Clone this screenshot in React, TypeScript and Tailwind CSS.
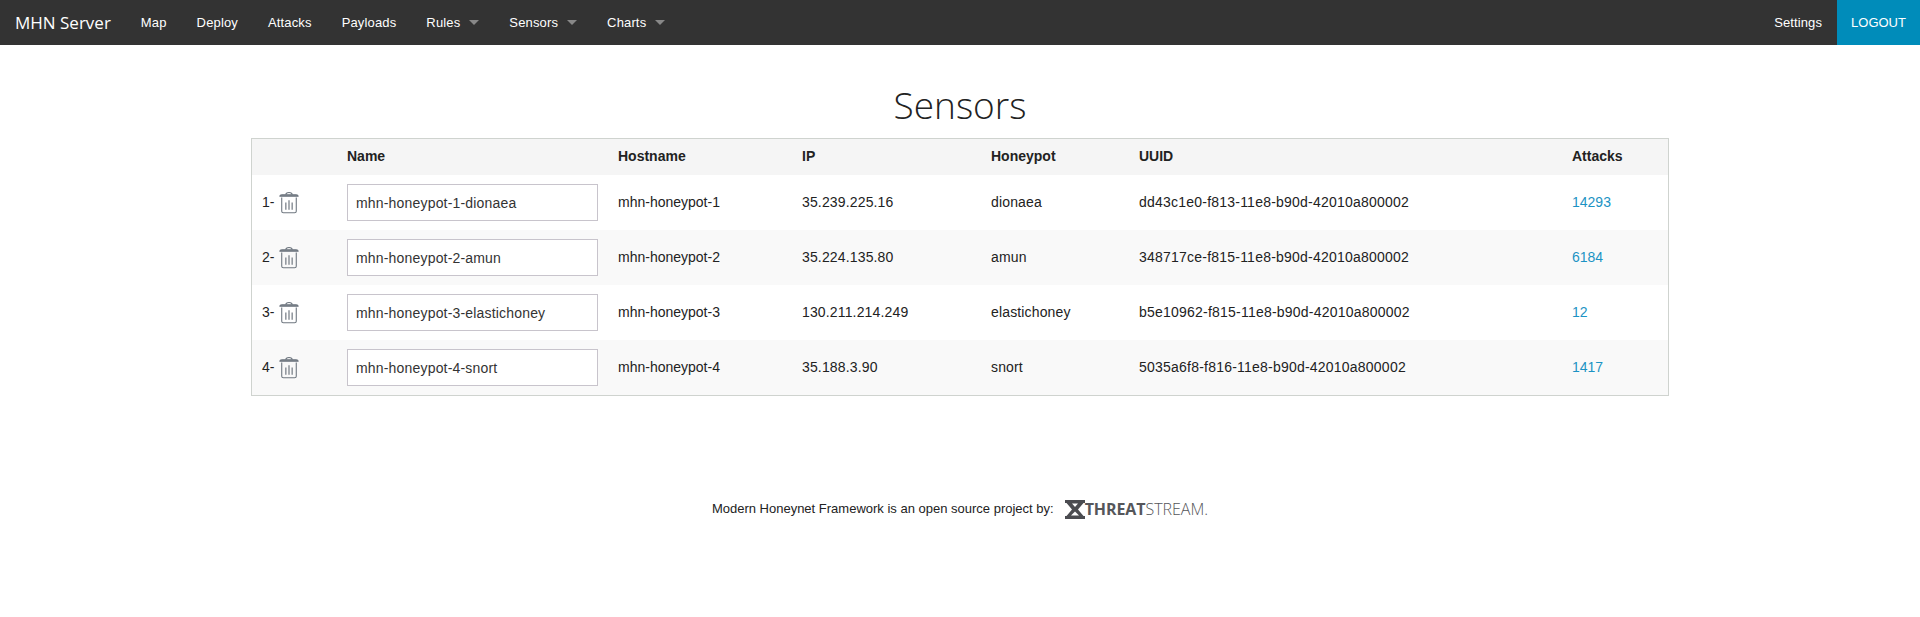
import React from "react";

const rows = [
  { n: 1, name: "mhn-honeypot-1-dionaea", host: "mhn-honeypot-1", ip: "35.239.225.16", pot: "dionaea", uuid: "dd43c1e0-f813-11e8-b90d-42010a800002", attacks: "14293" },
  { n: 2, name: "mhn-honeypot-2-amun", host: "mhn-honeypot-2", ip: "35.224.135.80", pot: "amun", uuid: "348717ce-f815-11e8-b90d-42010a800002", attacks: "6184" },
  { n: 3, name: "mhn-honeypot-3-elastichoney", host: "mhn-honeypot-3", ip: "130.211.214.249", pot: "elastichoney", uuid: "b5e10962-f815-11e8-b90d-42010a800002", attacks: "12" },
  { n: 4, name: "mhn-honeypot-4-snort", host: "mhn-honeypot-4", ip: "35.188.3.90", pot: "snort", uuid: "5035a6f8-f816-11e8-b90d-42010a800002", attacks: "1417" },
];

function Trash() {
  return (
    <svg width="20" height="23" viewBox="0 0 22 24" fill="none" stroke="#6f7780" strokeWidth="1.2" className="block">
      <path d="M1 5 C1 3.6 2 3.4 3.5 3.4 H18.5 C20 3.4 21 3.6 21 5 Z" fill="#8a9097" />
      <path d="M7.5 3.4 C7.5 1.4 9 1 11 1 C13 1 14.5 1.4 14.5 3.4" />
      <path d="M3 6.5 V21.5 C3 22.6 3.8 23.2 4.8 23.2 H17.2 C18.2 23.2 19 22.6 19 21.5 V6.5" />
      <path d="M7.5 12 V20 M11 9.5 V20 M14.5 12 V20" strokeWidth="1.6" stroke="#8a9097" />
    </svg>
  );
}

function Caret() {
  return <span className="ml-[9px] inline-block h-0 w-0 border-x-[5px] border-t-[5px] border-x-transparent border-t-[#888888]" />;
}

function NavLink({ label, caret, cls }: { label: string; caret?: boolean; cls: string }) {
  return (
    <a className={`flex items-center tracking-[0.15px] ${cls}`}>
      {label}
      {caret && <Caret />}
    </a>
  );
}

export default function App() {
  return (
    <div className="min-h-[617px] bg-white font-['Liberation_Sans',Arial,sans-serif] text-[14px] text-[#222222]">
      <nav className="flex h-[45px] items-center bg-[#333333] text-[13px] text-white">
        <span className="ml-[15px] mr-[30px] font-['Open_Sans',sans-serif] text-[17px] leading-[45px]">MHN Server</span>
        <NavLink label="Map" cls="mr-[30px]" />
        <NavLink label="Deploy" cls="mr-[30px]" />
        <NavLink label="Attacks" cls="mr-[30px]" />
        <NavLink label="Payloads" cls="mr-[30px]" />
        <NavLink label="Rules" caret cls="mr-[30px]" />
        <NavLink label="Sensors" caret cls="mr-[30px]" />
        <NavLink label="Charts" caret cls="" />
        <a className="ml-auto mr-[15px] tracking-[0.1px]">Settings</a>
        <a className="flex h-full w-[83px] items-center justify-center bg-[#008cba]">LOGOUT</a>
      </nav>

      <main className="flex flex-col items-center">
        <h1 className="mb-[8px] mt-[35px] font-['Open_Sans',sans-serif] text-[37px] font-light leading-[50px] text-[#222222]">Sensors</h1>
        <div className="w-[1418px] border border-[#cfd3cf]">
          <table className="w-full table-fixed">
            <colgroup>
              <col className="w-[85px]" />
              <col className="w-[271px]" />
              <col className="w-[184px]" />
              <col className="w-[189px]" />
              <col className="w-[148px]" />
              <col className="w-[433px]" />
              <col className="w-[106px]" />
            </colgroup>
            <thead className="bg-[#f5f5f5]">
              <tr className="h-[36px] text-left font-bold">
                <th className="pb-[1px] pl-[10px]" />
                <th className="pb-[1px] pl-[10px]">Name</th>
                <th className="pb-[1px] pl-[10px]">Hostname</th>
                <th className="pb-[1px] pl-[10px]">IP</th>
                <th className="pb-[1px] pl-[10px]">Honeypot</th>
                <th className="pb-[1px] pl-[10px]">UUID</th>
                <th className="pb-[1px] pl-[10px]">Attacks</th>
              </tr>
            </thead>
            <tbody>
              {rows.map((r) => (
                <tr key={r.n} className="h-[55px] even:bg-[#f9f9f9]">
                  <td className="pl-[10px]">
                    <div className="flex items-center gap-[5px]">
                      <span>{r.n}-</span>
                      <Trash />
                    </div>
                  </td>
                  <td className="pl-[10px]">
                    <input
                      readOnly
                      value={r.name}
                      className="block h-[37px] w-[251px] border border-[#c8c4cc] bg-white px-[8px] text-[14px] tracking-[0.18px] text-[#333333] outline-none"
                    />
                  </td>
                  <td className="pl-[10px]">{r.host}</td>
                  <td className="pl-[10px] tracking-[0.15px]">{r.ip}</td>
                  <td className="pl-[10px] tracking-[0.15px]">{r.pot}</td>
                  <td className="pl-[10px] tracking-[0.22px]">{r.uuid}</td>
                  <td className="pl-[10px]">
                    <a className="text-[#1c93c4]">{r.attacks}</a>
                  </td>
                </tr>
              ))}
            </tbody>
          </table>
        </div>

        <footer className="mt-[103px] flex h-[20px] items-center">
          <span className="text-[13px]">Modern Honeynet Framework is an open source project by:</span>
          <span className="ml-[11px] flex items-center text-[#55565a]">
            <svg width="20" height="19" viewBox="0 0 20 19" className="block">
              <path d="M0 0 H20 V3 H18.5 L13 9.5 L18.5 16 H20 V19 H0 V16 H1.5 L7 9.5 L1.5 3 H0 Z M7 3.5 L10 7 L13 3.5 Z M6 15.5 H14 L10 11.5 Z" fill="#4b4c50" fillRule="evenodd" />
            </svg>
            <span className="font-['Open_Sans',sans-serif] text-[16px] font-bold leading-[20px] tracking-[-0.1px]">THREAT</span>
            <span className="font-['Open_Sans',sans-serif] text-[16px] font-light leading-[20px] tracking-[0px]">STREAM.</span>
          </span>
        </footer>
      </main>
    </div>
  );
}
